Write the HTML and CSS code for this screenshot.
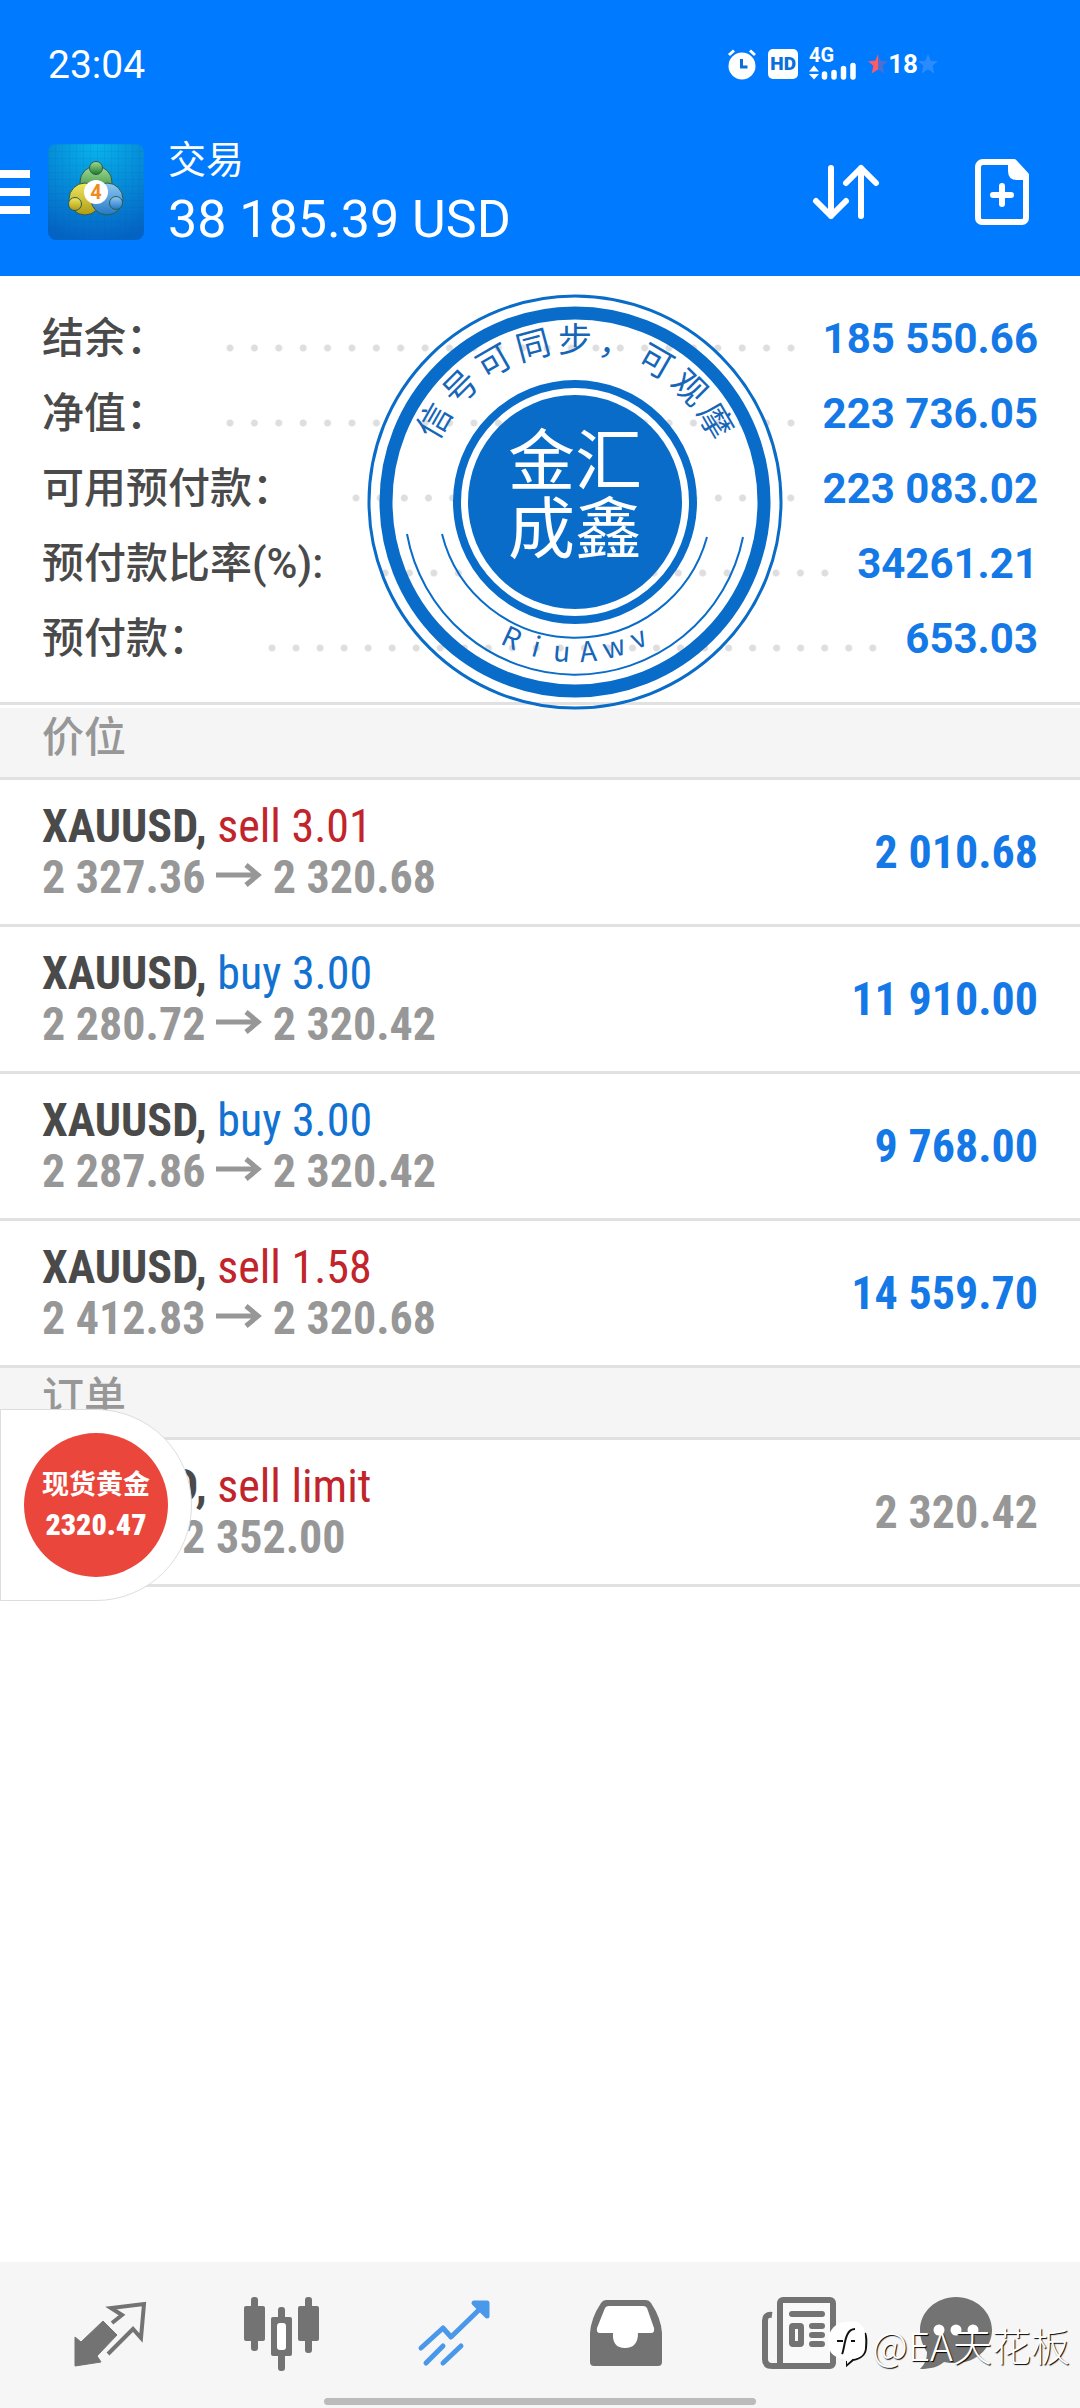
FILE: index.html
```html
<!doctype html>
<html lang="zh-CN">

<head>
    <meta charset="utf-8">
    <meta name="viewport" content="width=device-width">
    <title>交易</title>
    <link rel="stylesheet" href="styles.css">
</head>

<body>
    <header class="topbar">
        <div class="status">
            <time>23:04</time>
            <div class="status-icons">
                <svg class="alarm" viewBox="0 0 30 32">
                    <circle cx="15" cy="18" r="13.5" fill="#fff" />
                    <path d="M2 7l5-4.500M28 7l-5-4.500" stroke="#fff" stroke-width="3" />
                    <path d="M14.500 11v8h6" fill="none" stroke="#0a6fd8" stroke-width="3" />
                </svg>
                <span class="hd">HD</span>
                <svg class="signal" viewBox="0 0 48 32">
                    <text x="0" y="14" class="signal-text">4G</text>
                    <path d="M0 23.500l5-6 5 6zM0 26l5 5.500 5-5.500z" fill="#fff" />
                    <path d="M15.500 26v3M25 24.500v4.500M34.500 20.500V29M44 17.500V29" stroke="#fff" stroke-width="5.500" stroke-linecap="round" />
                </svg>
                <div class="battery">
                    <svg viewBox="0 0 22 22">
                        <path d="M11 0l3 7.500 8 .5-6 5 2 8.500-7-4.500z" fill="#4d6fd0" />
                        <path d="M11 0v17l-7 4.500L6 13 0 8l8-.5z" fill="#ff5a66" />
                    </svg>
                    <b>18</b>
                    <svg viewBox="0 0 22 22">
                        <path d="M11 0l3 7.500 8 .5-6 5 2 8.500-7-4.500-7 4.500L6 13 0 8l8-.5z" fill="#2a8bff" />
                    </svg>
                </div>
            </div>
        </div>
        <div class="account">
            <button class="menu" aria-label="菜单"><i></i><i></i><i></i></button>
            <svg class="logo" viewBox="0 0 96 96">
                <defs>
                    <radialGradient id="sky" cx=".5" cy="0" r="1">
                        <stop offset="0" stop-color="#08b4ec" />
                        <stop offset="1" stop-color="#0464c4" />
                    </radialGradient>
                    <linearGradient id="green" x2="0" y2="1">
                        <stop offset="0" stop-color="#a4dc94" />
                        <stop offset="1" stop-color="#1c7c2c" />
                    </linearGradient>
                    <linearGradient id="yellow" x2="0" y2="1">
                        <stop offset="0" stop-color="#f0e860" />
                        <stop offset="1" stop-color="#b09a14" />
                    </linearGradient>
                    <linearGradient id="blue" x2="0" y2="1">
                        <stop offset="0" stop-color="#90c8f4" />
                        <stop offset="1" stop-color="#2478c4" />
                    </linearGradient>
                    <pattern id="mesh" width="7" height="7" patternUnits="userSpaceOnUse">
                        <path d="M0 0H7M0 0V7" stroke="#0058b0" stroke-opacity=".2" />
                    </pattern>
                </defs>
                <rect width="96" height="96" rx="8" fill="url(#sky)" />
                <rect width="96" height="96" rx="8" fill="url(#mesh)" />
                <g stroke="#2a5c50" stroke-width="1">
                    <circle cx="48" cy="38" r="16" fill="url(#green)" />
                    <circle cx="37" cy="55" r="16" fill="url(#yellow)" />
                    <circle cx="59" cy="55" r="16" fill="url(#blue)" />
                    <circle cx="48" cy="24" r="6.500" fill="url(#green)" />
                    <circle cx="27" cy="60" r="6.500" fill="url(#yellow)" />
                    <circle cx="68" cy="59" r="6.500" fill="url(#blue)" />
                </g>
                <circle cx="48" cy="48" r="12" fill="#fff" />
                <text x="48" y="55" class="logo-text">4</text>
            </svg>
            <div class="heading">
                <h1>交易</h1>
                <div class="total">38 185.39 USD</div>
            </div>
            <button aria-label="排序">
                <svg width="66" height="54" viewBox="0 0 66 54" fill="none" stroke="#fff" stroke-width="6" stroke-linecap="round" stroke-linejoin="round">
                    <path d="M18 3v48M3 36l15 15 15-15" />
                    <path d="M48 51V3M33 18L48 3l15 15" />
                </svg>
            </button>
            <button aria-label="新订单">
                <svg width="54" height="66" viewBox="0 0 54 66" fill="none" stroke="#fff" stroke-width="6" stroke-linecap="round" stroke-linejoin="round">
                    <path d="M8 3h31l12 13v43a4 4 0 0 1-4 4H7a4 4 0 0 1-4-4V8a5 5 0 0 1 5-5z" />
                    <path d="M36 5v7q0 6 6 6h8z" fill="#fff" />
                    <path d="M27 27v18M18 36h18" />
                </svg>
            </button>
        </div>
    </header>

    <main>
        <section class="summary">
            <dl>
                <div><dt>结余：</dt><dd>185 550.66</dd></div>
                <div><dt>净值：</dt><dd>223 736.05</dd></div>
                <div><dt>可用预付款：</dt><dd>223 083.02</dd></div>
                <div><dt>预付款比率(%):</dt><dd>34261.21</dd></div>
                <div><dt>预付款：</dt><dd>653.03</dd></div>
            </dl>

            <!-- seal, origin in its centre -->
            <svg class="seal" viewBox="-210 -210 420 420">
                <circle class="ring" r="206" stroke-width="3" />
                <circle class="ring" r="189" stroke-width="13" />
                <circle class="ring" r="118" stroke-width="8" />
                <circle r="107" fill="#086cc8" />
                <path class="ring" d="M-168 32A171 171 0 0 0 168 35" stroke-width="2" />
                <path class="ring" d="M-133 32A137 137 0 0 0 132 35" stroke-width="2" />
                <g class="seal-top">
                    <text y="-150" transform="rotate(-60)">信</text>
                    <text y="-150" transform="rotate(-45)">号</text>
                    <text y="-150" transform="rotate(-30)">可</text>
                    <text y="-150" transform="rotate(-15)">同</text>
                    <text y="-150">步</text>
                    <text y="-150" transform="rotate(15)">，</text>
                    <text y="-150" transform="rotate(30)">可</text>
                    <text y="-150" transform="rotate(45)">观</text>
                    <text y="-150" transform="rotate(60)">摩</text>
                </g>
                <g class="seal-bottom">
                    <text y="160" transform="rotate(25)">R</text>
                    <text y="160" transform="rotate(15)">i</text>
                    <text y="160" transform="rotate(5)">u</text>
                    <text y="160" transform="rotate(-5)">A</text>
                    <text y="160" transform="rotate(-15)">w</text>
                    <text y="160" transform="rotate(-25)">v</text>
                </g>
                <g class="seal-name">
                    <text y="-17">金汇</text>
                    <text y="51">成鑫</text>
                </g>
            </svg>
        </section>

        <section>
            <h2>价位</h2>
            <ul>
                <li>
                    <div class="deal">
                        <div><b>XAUUSD,</b> <span class="sell">sell 3.01</span></div>
                        <div class="prices">2 327.36 <svg class="arrow" viewBox="0 0 46 24"><path d="M0 12h43M30 2l12 10-12 10" /></svg> 2 320.68</div>
                    </div>
                    <span class="profit">2 010.68</span>
                </li>
                <li>
                    <div class="deal">
                        <div><b>XAUUSD,</b> <span class="buy">buy 3.00</span></div>
                        <div class="prices">2 280.72 <svg class="arrow" viewBox="0 0 46 24"><path d="M0 12h43M30 2l12 10-12 10" /></svg> 2 320.42</div>
                    </div>
                    <span class="profit">11 910.00</span>
                </li>
                <li>
                    <div class="deal">
                        <div><b>XAUUSD,</b> <span class="buy">buy 3.00</span></div>
                        <div class="prices">2 287.86 <svg class="arrow" viewBox="0 0 46 24"><path d="M0 12h43M30 2l12 10-12 10" /></svg> 2 320.42</div>
                    </div>
                    <span class="profit">9 768.00</span>
                </li>
                <li>
                    <div class="deal">
                        <div><b>XAUUSD,</b> <span class="sell">sell 1.58</span></div>
                        <div class="prices">2 412.83 <svg class="arrow" viewBox="0 0 46 24"><path d="M0 12h43M30 2l12 10-12 10" /></svg> 2 320.68</div>
                    </div>
                    <span class="profit">14 559.70</span>
                </li>
            </ul>
        </section>

        <section class="orders">
            <h2>订单</h2>
            <ul>
                <li>
                    <div class="deal">
                        <div><b>XAUUSD,</b> <span class="sell">sell limit</span></div>
                        <div class="prices">3.00 at 2 352.00</div>
                    </div>
                    <span class="profit pending">2 320.42</span>
                </li>
            </ul>
            <div class="floater">
                <button class="quote"><span>现货黄金</span><b>2320.47</b></button>
            </div>
        </section>
    </main>

    <nav>
        <div class="tabs">
            <a href="#quotes" aria-label="行情">
                <svg viewBox="0 0 80 80">
                    <path d="M5 43l6 5 22-21 14 14-20 21 4 6-26 4z" fill="currentColor" stroke="currentColor" stroke-linejoin="round" />
                    <path d="M42 29l10-8-11-7 33-4-3 34-8-9-25 25" fill="none" stroke="currentColor" stroke-width="4" />
                </svg>
            </a>
            <a href="#charts" aria-label="图表">
                <svg viewBox="0 0 80 80" fill="currentColor">
                    <rect x="2" y="12" width="21" height="35" rx="2" />
                    <rect x="9" y="3" width="7" height="54" rx="3" />
                    <rect x="56" y="12" width="21" height="35" rx="2" />
                    <rect x="63" y="3" width="7" height="56" rx="3" />
                    <rect x="36" y="13" width="7" height="64" rx="3" />
                    <rect x="29" y="23" width="21" height="39" rx="2" />
                    <rect x="35" y="29" width="9" height="27" rx="3" fill="#fff" />
                </svg>
            </a>
            <a href="#trade" class="active" aria-label="交易">
                <svg viewBox="0 0 80 80" fill="none" stroke="currentColor" stroke-width="5" stroke-linecap="round" stroke-linejoin="round">
                    <path d="M7 54l22-20 8 9L70 11M12 69l17-17M29 69l18-17" />
                    <path d="M60 9h13v13z" fill="currentColor" />
                </svg>
            </a>
            <a href="#history" aria-label="历史">
                <svg viewBox="0 0 80 80" fill="currentColor">
                    <path d="M20 6h40q3 0 5 3 10 15 11 30v29q0 4-4 4H8q-4 0-4-4V39Q5 24 15 9q2-3 5-3z" />
                    <path d="M23 12h34q3 0 4 2l7 20q1 5-3 5H52q0 15-13 15T27 39H14q-4 0-3-5l8-20q1-2 4-2z" fill="#fff" />
                </svg>
            </a>
            <a href="#news" aria-label="新闻">
                <svg viewBox="0 0 80 80" fill="none" stroke="currentColor" stroke-width="6">
                    <path d="M13 21q-7-1-7 6v38q0 7 7 7h57" />
                    <rect x="21" y="6" width="53" height="66" rx="3" fill="#f9f9f9" />
                    <path d="M33 20h30M53 32h10M53 41h10M53 50h10" stroke-linecap="round" />
                    <rect x="33" y="32" width="9" height="18" rx="1" />
                </svg>
            </a>
            <a href="#chat" aria-label="聊天">
                <svg viewBox="0 0 80 80">
                    <path d="M40 3c20 0 36 15 36 33S60 69 40 69c-4 0-8 0-12-1-6 5-13 7-24 7 5-5 7-10 7-17-4-6-7-13-7-22C4 18 20 3 40 3z" fill="currentColor" />
                    <g fill="#fff">
                        <circle cx="23" cy="36" r="5.500" />
                        <circle cx="40" cy="36" r="5.500" />
                        <circle cx="57" cy="36" r="5.500" />
                    </g>
                </svg>
            </a>
        </div>
        <div class="homebar"></div>
        <div class="watermark">
            <svg viewBox="0 0 40 46">
                <path d="M37 12q2 4 1 15-1 10-13 12l-6 5v-4" fill="none" stroke="#111" stroke-width="2" />
                <path d="M18 1c14-2 19 3 19 16v8c0 9-4 12-13 13l-5 5v-5C8 38 0 33 0 21 0 9 8 1 18 1z" fill="#fff" />
                <path d="M14 33c3-5 2-25 13-25M9 20h6M23 20h4" fill="none" stroke="#111" stroke-width="2" />
            </svg>
            <span>@EA天花板</span>
        </div>
    </nav>
</body>

</html>
```
FILE: styles.css
```css
* {
    box-sizing: border-box;
    margin: 0;
    padding: 0;
}

body {
    display: flex;
    flex-direction: column;
    min-height: 100vh;
    background: #fff;
    color: #4a4a4a;
    font-family: Roboto, "Noto Sans CJK SC", sans-serif;
}

button {
    border: 0;
    background: none;
    color: inherit;
    font-family: inherit;
}

svg {
    display: block;
    overflow: visible;
}

ul {
    list-style: none;
}

/* header */

.topbar {
    padding-bottom: 22px;
    background: #007aff;
    color: #fff;
}

.status {
    display: flex;
    justify-content: space-between;
    align-items: center;
    height: 130px;
    padding: 0 142px 0 48px;
    font-size: 39px;
}

.status-icons {
    display: flex;
    align-items: center;
    gap: 11px;
    padding-bottom: 3px;
}

.alarm {
    width: 30px;
    height: 32px;
}

.hd {
    width: 30px;
    border-radius: 5px;
    background: #fff;
    color: #0a6fd8;
    font-size: 19px;
    font-weight: 900;
    line-height: 30px;
    text-align: center;
}

.signal {
    width: 48px;
    height: 32px;
}

.signal-text {
    fill: #fff;
    font-size: 20px;
    font-weight: 700;
}

.battery {
    display: flex;
    align-items: center;
    font-size: 26px;
}

.battery svg {
    width: 20px;
    height: 20px;
}

.account {
    display: flex;
    align-items: center;
    height: 124px;
    padding-right: 51px;
}

.account button + button {
    margin-left: 96px;
}

.menu {
    display: flex;
    flex-direction: column;
    gap: 10px;
    width: 30px;
    margin-right: 18px;
}

.menu i {
    height: 8px;
    background: #fff;
}

.logo {
    width: 96px;
    height: 96px;
}

.logo-text {
    fill: #f08a1c;
    font-size: 20px;
    font-weight: 700;
    text-anchor: middle;
}

.heading {
    flex: 1;
    padding: 6px 0 0 24px;
}

.heading h1 {
    font-size: 38px;
    font-weight: 400;
    line-height: 50px;
}

.total {
    font-size: 52px;
    line-height: 70px;
}

/* account summary */

.summary {
    position: relative;
    margin-bottom: 3px;
    padding: 25px 42px 26px;
    border-bottom: 3px solid #e1e1e1;
}

.summary dl div {
    display: flex;
    align-items: center;
    height: 75px;
    font-size: 42px;
    line-height: 60px;
}

.summary dt {
    font-weight: 500;
}

/* dotted leader between label and value */
.summary dl div::before {
    content: "";
    flex: 1;
    order: 1;
    height: 8px;
    margin: 18px 20px 0 50px;
    background: radial-gradient(circle, #dedede 3px, transparent 4px) 0 0 / 24px 8px space;
}

.summary dd {
    order: 2;
    color: #1479e6;
    font-weight: 700;
}

.seal {
    position: absolute;
    top: 16px;
    left: calc(50% - 175px);
    width: 420px;
    height: 420px;
}

.seal text {
    fill: #1566b8;
    font-family: "Noto Sans CJK SC", sans-serif;
    text-anchor: middle;
}

.ring {
    fill: none;
    stroke: #086cc8;
}

.seal-top {
    font-size: 34px;
}

.seal-bottom {
    font-size: 28px;
}

.seal .seal-name text {
    fill: #fff;
    font-size: 67px;
}

/* positions and orders */

h2 {
    height: 72px;
    padding: 0 42px;
    border-bottom: 3px solid #e1e1e1;
    background: #f5f5f5;
    color: #979797;
    font-size: 42px;
    font-weight: 500;
    line-height: 60px;
}

li {
    display: flex;
    justify-content: space-between;
    align-items: center;
    padding: 21px 42px;
    border-bottom: 3px solid #e1e1e1;
    font-family: "Roboto Condensed", "Liberation Sans Narrow", Roboto, sans-serif;
    font-size: 46px;
    line-height: 51px;
}

.sell {
    color: #c1242b;
}

.buy {
    color: #1272d2;
}

.prices {
    color: #979797;
    font-weight: 700;
}

.arrow {
    display: inline-block;
    width: 46px;
    height: 24px;
    margin-bottom: 6px;
    fill: none;
    stroke: #979797;
    stroke-width: 5px;
}

.profit {
    color: #1479e6;
    font-weight: 700;
}

.pending {
    color: #979797;
}

.orders {
    position: relative;
}

.floater {
    position: absolute;
    top: 41px;
    left: 0;
    padding: 23px;
    border: 1px solid #ddd;
    border-radius: 0 96px 96px 0;
    background: #fff;
}

.quote {
    display: flex;
    flex-direction: column;
    align-items: center;
    justify-content: center;
    width: 144px;
    height: 144px;
    border-radius: 50%;
    background: #ea463b;
    color: #fff;
    font-size: 27px;
    font-weight: 700;
    line-height: 40px;
}

.quote b {
    font-family: "Roboto Condensed", "Liberation Sans Narrow", Roboto, sans-serif;
    font-size: 30px;
}

/* bottom navigation */

nav {
    position: relative;
    margin-top: auto;
    background: #f6f6f6;
}

.tabs {
    display: grid;
    grid-template-columns: repeat(5, 12fr) 10fr;
    padding: 32px 52px 24px 24px;
}

.tabs a {
    display: flex;
    justify-content: center;
    color: #737373;
}

.tabs svg {
    width: 80px;
    height: 80px;
}

.tabs .active {
    color: #4a98ea;
}

.homebar {
    width: 40%;
    height: 7px;
    margin: 0 auto 3px;
    border-radius: 4px;
    background: #bbb;
}

.watermark {
    position: absolute;
    right: 10px;
    bottom: 39px;
    display: flex;
    align-items: center;
    gap: 4px;
    color: #fff;
    font-family: "Noto Sans CJK SC", sans-serif;
    font-size: 39px;
    font-weight: 300;
    line-height: 50px;
    text-shadow: 1px 1px 1px #000;
}

.watermark svg {
    width: 40px;
    height: 46px;
}
```
